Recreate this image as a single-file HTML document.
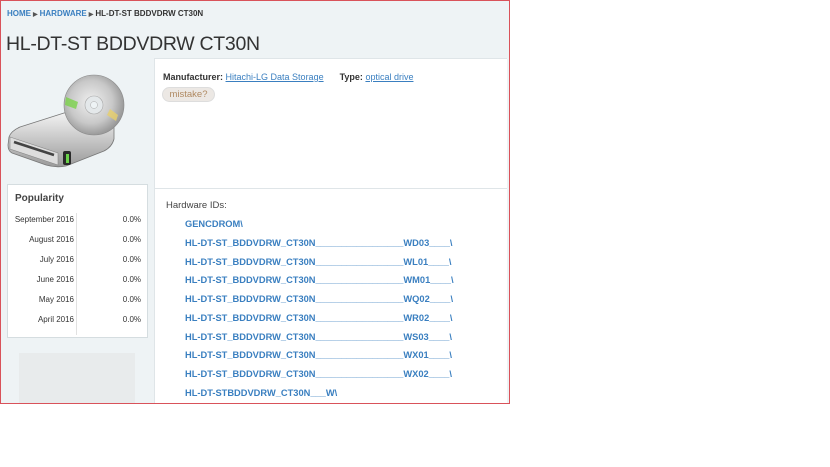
<!DOCTYPE html>
<html><head><meta charset="utf-8"><style>
*{margin:0;padding:0;box-sizing:border-box}
body{width:830px;height:467px;background:#fff;font-family:"Liberation Sans",Arial,sans-serif;position:relative;overflow:hidden}
#frame{position:absolute;left:0;top:0;width:510px;height:404px;border:1px solid #d9525a;background:#eef3f5;overflow:hidden}
.crumb{position:absolute;left:6px;top:8px;font-size:8px;font-weight:bold;color:#333}
.crumb a{color:#3a7fc0;text-decoration:none}
.crumb span{font-size:6px;color:#555;margin:0 2px}
h1{position:absolute;left:5px;top:32px;font-size:19.5px;font-weight:normal;color:#333;letter-spacing:-0.3px}
#panel{position:absolute;left:153px;top:57px;width:353px;height:350px;background:#fff;border-left:1px solid #dfe5e8;border-top:1px solid #dfe5e8}
#sep{position:absolute;left:0;top:129px;width:100%;height:1px;background:#dfe5e8}
.info{position:absolute;left:8px;top:13px;font-size:9px;color:#333}
.info b{font-weight:bold}
.info a{color:#3a7fc0;text-decoration:underline}
.btn{position:absolute;left:7px;top:28px;width:53px;height:15px;border-radius:8px;background:#ece8e4;border:1px solid #ddd;color:#b08a62;font-size:9.5px;text-align:center;line-height:13px}
.hw{position:absolute;left:11px;top:141px;font-size:9.5px;color:#444}
.ids{position:absolute;left:30px;top:156px;font-size:9.3px;font-weight:bold;color:#3a7fc0}
.ids div{height:18.75px;line-height:18.75px;white-space:pre}
#pop{position:absolute;left:6px;top:183px;width:141px;height:154px;background:#fff;border:1px solid #d5dde0}
#pop h3{position:absolute;left:7px;top:8px;font-size:10px;font-weight:bold;color:#444}
#pop .vl{position:absolute;left:68px;top:28px;width:1px;height:122px;background:#e2e2e2}
.r{position:absolute;font-size:8px;color:#333}
#gray{position:absolute;left:18px;top:352px;width:116px;height:60px;background:#e8ebec}
</style></head><body>
<div id="frame">
<div class="crumb"><a>HOME</a><span>▶</span><a>HARDWARE</a><span>▶</span>HL-DT-ST BDDVDRW CT30N</div>
<h1>HL-DT-ST BDDVDRW CT30N</h1>
<svg style="position:absolute;left:4px;top:68px" width="122" height="105" viewBox="0 0 120 105">
<defs><linearGradient id="dr" x1="0" y1="0" x2="0" y2="1"><stop offset="0" stop-color="#f4f4f4"/><stop offset="1" stop-color="#9a9a9a"/></linearGradient>
<radialGradient id="cd" cx=".45" cy=".45" r=".6"><stop offset="0" stop-color="#f0f0f0"/><stop offset=".6" stop-color="#c8c8c8"/><stop offset="1" stop-color="#8e8e8e"/></radialGradient></defs>
<path d="M14 58 L58 44 Q70 42 82 44 Q104 48 108 56 L108 70 Q106 78 98 82 L60 97 Q50 99 40 96 L6 84 Q2 82 2 76 L3 68 Q5 62 14 58Z" fill="url(#dr)" stroke="#777" stroke-width=".8"/>
<path d="M4 68 L52 84 L52 96 L4 80Z" fill="#ddd" stroke="#888" stroke-width=".6"/>
<path d="M8 73 L48 86" stroke="#444" stroke-width="2.5"/>
<rect x="57" y="82" width="8" height="14" rx="2" fill="#2a2a2a"/><rect x="60" y="85" width="3" height="9" fill="#6ad24a"/>
<circle cx="88" cy="36" r="30" fill="url(#cd)" stroke="#888" stroke-width=".6"/>
<path d="M60 28 L72 33 L70 40 L59 36Z" fill="#7ad24a" opacity=".8"/>
<path d="M112 46 L104 40 L101 46 L110 52Z" fill="#e8d06a" opacity=".8"/>
<circle cx="88" cy="36" r="9" fill="#e4e8ea" stroke="#aaa" stroke-width=".6"/><circle cx="88" cy="36" r="3.5" fill="#eef3f5" stroke="#aaa" stroke-width=".5"/>
</svg>
<div id="pop"><h3>Popularity</h3><div class="vl"></div>
<div class="r" style="right:73px;top:30px">September 2016</div><div class="r" style="right:6px;top:30px">0.0%</div>
<div class="r" style="right:73px;top:50px">August 2016</div><div class="r" style="right:6px;top:50px">0.0%</div>
<div class="r" style="right:73px;top:70px">July 2016</div><div class="r" style="right:6px;top:70px">0.0%</div>
<div class="r" style="right:73px;top:90px">June 2016</div><div class="r" style="right:6px;top:90px">0.0%</div>
<div class="r" style="right:73px;top:110px">May 2016</div><div class="r" style="right:6px;top:110px">0.0%</div>
<div class="r" style="right:73px;top:130px">April 2016</div><div class="r" style="right:6px;top:130px">0.0%</div>
</div>
<div id="gray"></div>
<div id="panel">
<div class="info"><b>Manufacturer:</b> <a>Hitachi-LG Data Storage</a><span style="display:inline-block;width:16px"></span><b>Type:</b> <a>optical drive</a></div>
<div class="btn">mistake?</div>
<div id="sep"></div>
<div class="hw">Hardware IDs:</div>
<div class="ids">
<div>GENCDROM\</div>
<div>HL-DT-ST_BDDVDRW_CT30N_________________WD03____\</div>
<div>HL-DT-ST_BDDVDRW_CT30N_________________WL01____\</div>
<div>HL-DT-ST_BDDVDRW_CT30N_________________WM01____\</div>
<div>HL-DT-ST_BDDVDRW_CT30N_________________WQ02____\</div>
<div>HL-DT-ST_BDDVDRW_CT30N_________________WR02____\</div>
<div>HL-DT-ST_BDDVDRW_CT30N_________________WS03____\</div>
<div>HL-DT-ST_BDDVDRW_CT30N_________________WX01____\</div>
<div>HL-DT-ST_BDDVDRW_CT30N_________________WX02____\</div>
<div>HL-DT-STBDDVDRW_CT30N___W\</div>
</div>
</div>
</div>
</body></html>
